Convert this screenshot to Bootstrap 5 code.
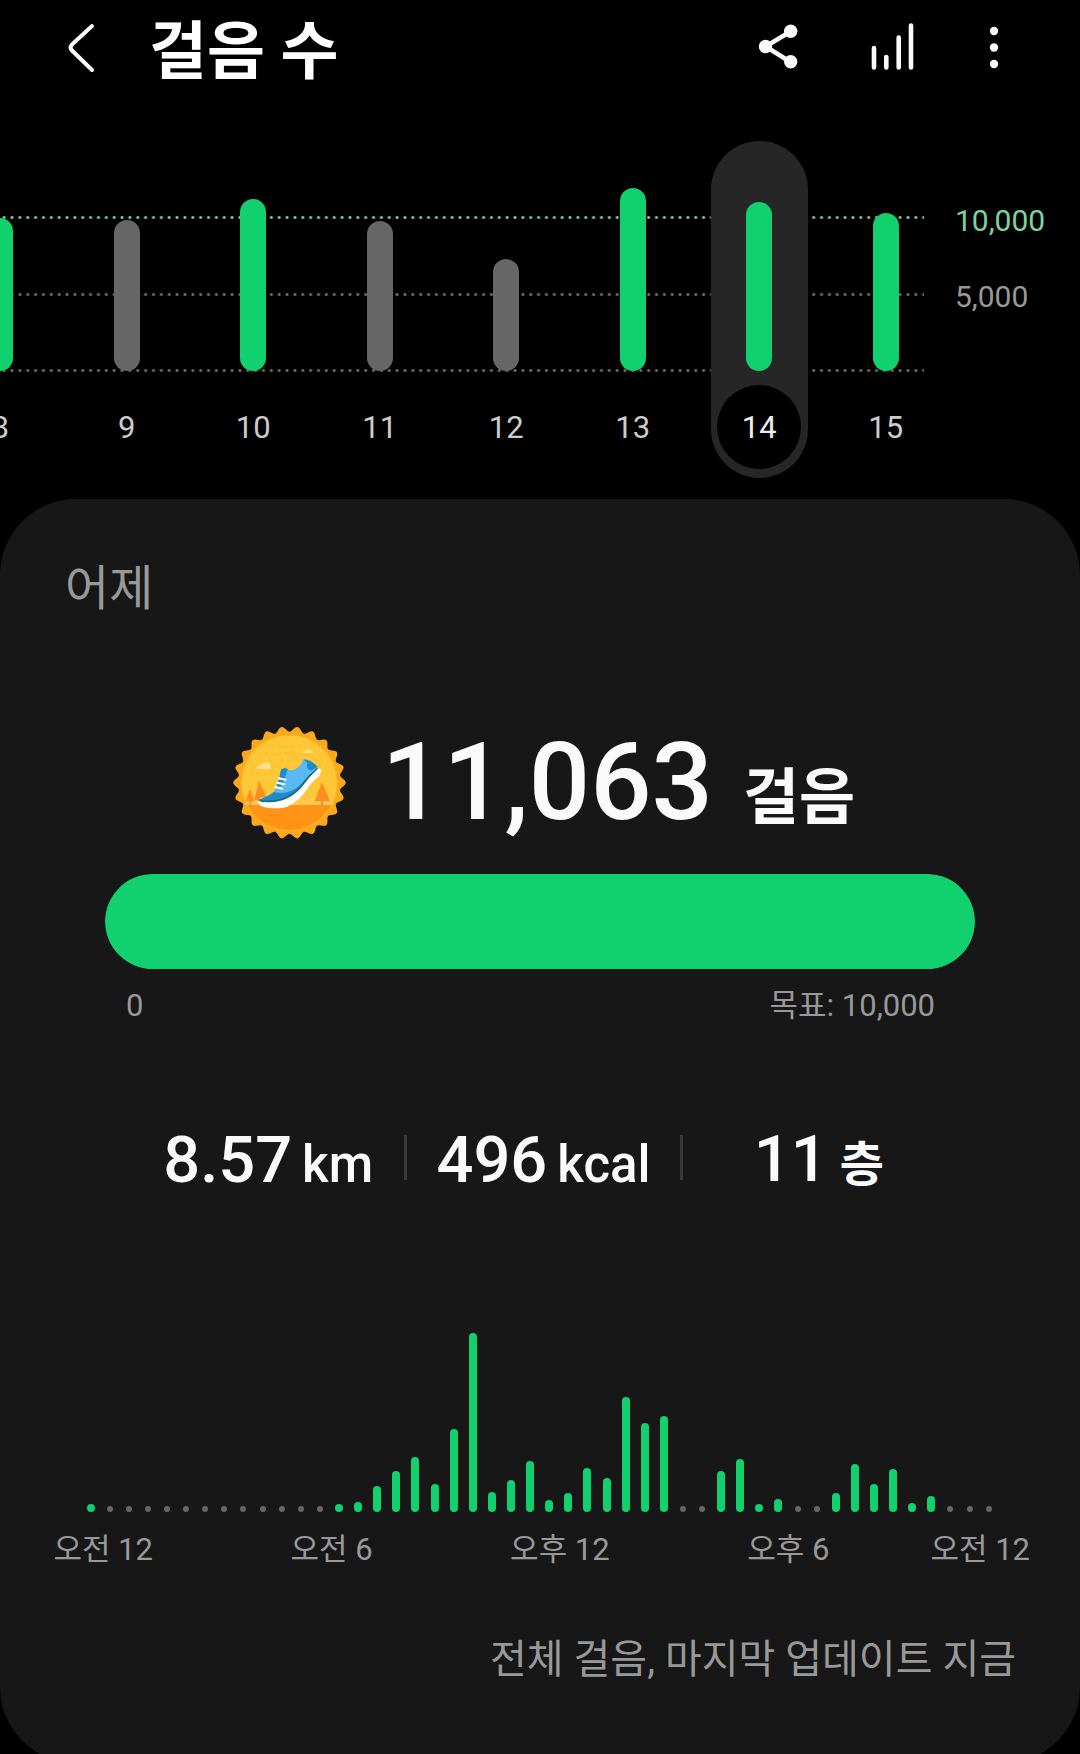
<!DOCTYPE html>
<html lang="ko" data-bs-theme="dark">
<head>
<meta charset="utf-8">
<meta name="viewport" content="width=device-width, initial-scale=1">
<title>걸음 수</title>
<link href="https://cdn.jsdelivr.net/npm/bootstrap@5.3.0/dist/css/bootstrap.min.css" rel="stylesheet">
<style>
  :root { --go: #11d16f; --sheet: #171717; --ink: #fafafa; --dim: #999; }
  body { background: #000; color: var(--ink); font-family: Roboto, "Noto Sans CJK KR", sans-serif; font-size: 31px; line-height: 42px; }
  .app { height: 100vh; overflow: hidden; }
  .topbar { height: 94px; padding: 0 62px 0 57px; }
  .topbar h1 { font-size: 63px; line-height: 80px; font-weight: 700; padding-top: 9px; margin-left: 44px; }
  .tool { width: 48px; height: 48px; color: var(--ink); }
  .tool svg { display: block; width: 48px; height: 48px; }
  .tool.trend { margin: 0 54px 0 66px; }

  .week { padding: 47px 0 21px; }
  .days { margin-left: -63px; z-index: 1; }
  .day { width: 97px; height: 337px; padding-bottom: 9px; color: #ccc; border-radius: 49px; }
  .day i { width: 26px; border-radius: 13px; background: #666; }
  .day.hit i { background: var(--go); }
  .day span { width: 84px; height: 84px; margin-top: 14px; padding-top: 2px; border-radius: 50%; }
  .day.on { background: #262626; color: #eee; }
  .day.on span { background: #000; }
  .lines { position: absolute; top: 75px; left: -4px; right: 25px; height: 156px; }
  .lines div { height: 3px; background: radial-gradient(circle, #6c6c6c 1px, transparent 2px) center / calc(100% / 118) 3px repeat-x; }
  .lines div.goal { background-image: radial-gradient(circle, #7cc797 1px, transparent 2px); }
  .scale { width: 131px; padding: 59px 0 0 6px; font-size: 30px; color: var(--dim); }
  .scale div { height: 76px; }
  .scale .goal { color: #7fd29d; }

  .sheet { background: var(--sheet); border-radius: 76px; padding: 60px 0 78px; }
  .sheet h2 { font-size: 48px; line-height: 60px; font-weight: 400; color: var(--dim); padding-left: 65px; }
  .total { height: 113px; margin-top: 107px; padding-left: 8px; gap: 36px; }
  .total svg { width: 113px; height: 113px; }
  .total strong { font-size: 108px; line-height: 113px; font-weight: 500; }
  .total small { font-size: 61px; font-weight: 700; margin-left: 30px; }
  .goalbar { height: 95px; border-radius: 48px; margin: 35px 105px 0; background: #333; }
  .goalbar .progress-bar { background: var(--go); border-radius: 48px; }
  .ends { margin: 16px 145px 0 126px; color: var(--dim); }
  .stats { margin: 95px 125px 0 132px; height: 80px; }
  .stat { font-size: 65px; line-height: 80px; font-weight: 500; }
  .stat small { font-size: 51px; margin-left: 10px; font-weight: 500; }
  .stat small.ko { font-size: 48px; font-weight: 700; margin-left: 12px; }
  .bar-sep { width: 3px; height: 45px; margin-bottom: 10px; background: #3a3a3a; }
  .hours { height: 179px; margin: 131px 82px 0 81px; }
  .hours i { width: 8px; border-radius: 4px; background: var(--go); }
  .hours i.none { width: 6px; height: 6px; background: #666; }
  .times { margin: 17px 50px 0 -11px; color: var(--dim); }
  .times .last { padding-left: 28px; }
  .updated { font-size: 40px; line-height: 50px; margin: 64px 64px 0; color: var(--dim); }
</style>
</head>
<body>
<div class="app">
  <header class="topbar d-flex align-items-center">
    <button class="tool btn p-0 border-0" aria-label="뒤로">
      <svg viewBox="0 0 48 48" overflow="visible" fill="none" stroke="currentColor" stroke-width="4" stroke-linecap="round" stroke-linejoin="round"><path d="M35 3 15 21.500Q12 24.500 15 27.500L35 47"/></svg>
    </button>
    <h1 class="mb-0 flex-grow-1">걸음 수</h1>
    <button class="tool btn p-0 border-0" aria-label="공유">
      <svg viewBox="0 0 48 48" fill="currentColor"><path d="M36.500 8.500 11.500 23.500 36.500 39" fill="none" stroke="currentColor" stroke-width="4.500"/><circle cx="11.500" cy="23.500" r="6.700"/><circle cx="36.700" cy="8.200" r="6.700"/><circle cx="36.700" cy="38.800" r="6.700"/></svg>
    </button>
    <button class="tool trend btn p-0 border-0" aria-label="통계">
      <svg viewBox="0 0 48 48" overflow="visible" stroke="currentColor" stroke-width="4.600" stroke-linecap="round"><path d="M6 25V44.500M18.300 34V44.500M30.700 14.500V44.500M43 2.500V44.500"/></svg>
    </button>
    <button class="tool btn p-0 border-0" aria-label="더보기">
      <svg viewBox="0 0 48 48" fill="currentColor"><circle cx="24" cy="8" r="4.200"/><circle cx="24" cy="24.500" r="4.200"/><circle cx="24" cy="41" r="4.200"/></svg>
    </button>
  </header>

  <section class="week d-flex">
    <div class="flex-grow-1 position-relative">
      <div class="lines d-flex flex-column justify-content-between"><div class="goal"></div><div></div><div></div></div>
      <div class="days d-flex position-relative">
        <div class="col"><div class="day hit mx-auto d-flex flex-column align-items-center justify-content-end"><i style="height:153px"></i><span class="d-flex align-items-center justify-content-center">8</span></div></div>
        <div class="col"><div class="day mx-auto d-flex flex-column align-items-center justify-content-end"><i style="height:151px"></i><span class="d-flex align-items-center justify-content-center">9</span></div></div>
        <div class="col"><div class="day hit mx-auto d-flex flex-column align-items-center justify-content-end"><i style="height:172px"></i><span class="d-flex align-items-center justify-content-center">10</span></div></div>
        <div class="col"><div class="day mx-auto d-flex flex-column align-items-center justify-content-end"><i style="height:150px"></i><span class="d-flex align-items-center justify-content-center">11</span></div></div>
        <div class="col"><div class="day mx-auto d-flex flex-column align-items-center justify-content-end"><i style="height:112px"></i><span class="d-flex align-items-center justify-content-center">12</span></div></div>
        <div class="col"><div class="day hit mx-auto d-flex flex-column align-items-center justify-content-end"><i style="height:183px"></i><span class="d-flex align-items-center justify-content-center">13</span></div></div>
        <div class="col"><div class="day hit on mx-auto d-flex flex-column align-items-center justify-content-end"><i style="height:169px"></i><span class="d-flex align-items-center justify-content-center">14</span></div></div>
        <div class="col"><div class="day hit mx-auto d-flex flex-column align-items-center justify-content-end"><i style="height:158px"></i><span class="d-flex align-items-center justify-content-center">15</span></div></div>
      </div>
    </div>
    <div class="scale flex-shrink-0"><div class="goal">10,000</div><div>5,000</div></div>
  </section>

  <main class="sheet">
    <h2 class="mb-0">어제</h2>
    <div class="total d-flex justify-content-center align-items-center">
      <svg viewBox="96 77 339 339" aria-hidden="true">
        <path id="rim" fill="#fba91c"/>
        <circle cx="265" cy="248" r="144" fill="#fdc738"/>
        <path d="M150 160h230M138 180h254M130 200h270M126 220h280M170 140h190" stroke="#fbc233" stroke-width="8" stroke-dasharray="11 9"/>
        <path d="M130 298Q265 286 400 298L396 314H135Z" fill="#fecb50"/>
        <path d="M138 314H392A144 144 0 0 1 138 314Z" fill="#ff9317"/>
        <circle cx="265" cy="248" r="143" fill="none" stroke="#f9b62a" stroke-width="2"/>
        <path d="M165 205Q172 194 181 194Q187 182 200 186Q210 190 210 206Z" fill="#fee08a"/>
        <path d="M300 157Q307 154 312 152Q320 143 328 151Q336 154 341 158Z" fill="#fee08a"/>
        <path d="M174 240 196 291H178V314H171V300H160ZM147 266 160 303H150V314H145V303H134ZM363 244 387 303H366V314H360V303H341Z" fill="#ff8e21"/>
        <path d="M170 302Q172 320 200 322Q240 328 265 316Q296 299 318 267Q334 242 356 226L361 208 351 203Q330 225 316 245Q278 296 240 301Q205 308 170 302Z" fill="#fff"/>
        <path d="M170 300Q205 287 219 273Q232 253 240 208Q248 201 260 206Q264 212 278 208Q300 200 307 177Q332 180 350 200Q318 231 298 262Q272 291 236 300Q200 311 170 300Z" fill="#58b9f5"/>
        <path d="M170 300Q207 286 219 275Q260 286 294 257Q320 226 350 202Q319 234 300 262Q272 293 236 302Q198 311 170 300ZM240 208Q249 200 260 206Q253 235 239 260H226Q236 235 240 208ZM307 177Q334 180 350 200L328 211Q314 203 319 188Z" fill="#1d8cc8"/>
        <path d="M178 302Q212 306 242 297Q280 284 302 256Q323 226 350 204" fill="none" stroke="#14608f" stroke-width="4"/>
        <path d="M233 234 254 238M228 247 250 252M223 260 244 265" stroke="#fff" stroke-width="6" stroke-linecap="round"/>
      </svg>
      <div><strong>11,063</strong><small>걸음</small></div>
    </div>
    <div class="goalbar progress" role="progressbar" aria-label="걸음" aria-valuenow="100" aria-valuemin="0" aria-valuemax="100"><div class="progress-bar" style="width:100%"></div></div>
    <div class="ends d-flex justify-content-between"><span>0</span><span>목표: 10,000</span></div>

    <div class="stats d-flex align-items-center text-center text-nowrap">
      <div class="col stat">8.57<small>km</small></div>
      <div class="bar-sep"></div>
      <div class="col stat">496<small>kcal</small></div>
      <div class="bar-sep"></div>
      <div class="col stat">11<small class="ko">층</small></div>
    </div>

    <div class="hours d-flex align-items-end" id="hours"></div>
    <div class="times d-flex text-center text-nowrap">
      <span class="col">오전 12</span><span class="col">오전 6</span><span class="col">오후 12</span><span class="col">오후 6</span><span class="last">오전 12</span>
    </div>
    <p class="updated text-end mb-0">전체 걸음, 마지막 업데이트 지금</p>
  </main>
</div>
<script src="https://cdn.jsdelivr.net/npm/bootstrap@5.3.0/dist/js/bootstrap.bundle.min.js"></script>
<script>
  // Half-hourly activity, bar heights in px; 0 is drawn as an idle dot
  const halfHours = [8,0,0,0,0,0,0,0,0,0,0,0,0,8,10,26,41,55,28,83,179,20,32,51,
                     12,19,44,34,115,89,96,0,0,41,53,8,13,0,0,19,48,28,43,9,16,0,0,0];
  document.getElementById('hours').innerHTML = halfHours.map(h =>
    `<div class="col d-flex justify-content-center">${h ? `<i style="height:${h}px"></i>` : '<i class="none"></i>'}</div>`).join('');

  // Scalloped rim of the medal, 22 waves
  const pts = [];
  for (let a = 0; a < 360; a += 2) {
    const t = a * Math.PI / 180, r = 161 + 8 * Math.cos(22 * t);
    pts.push((265.5 + r * Math.cos(t)).toFixed(1) + ' ' + (247 + r * Math.sin(t)).toFixed(1));
  }
  document.getElementById('rim').setAttribute('d', 'M' + pts.join('L') + 'Z');
</script>
</body>
</html>
